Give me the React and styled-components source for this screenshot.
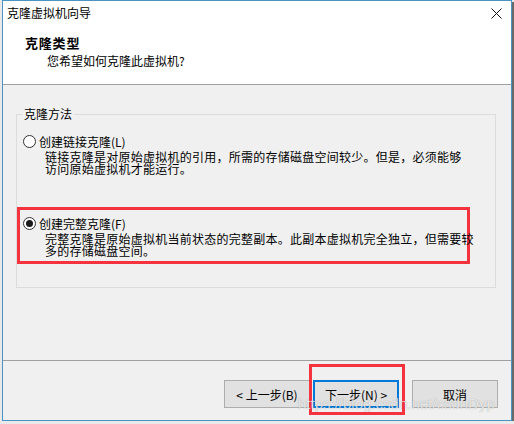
import React, { useState } from 'react'
import styled, { createGlobalStyle, css } from 'styled-components';

const GlobalStyle = createGlobalStyle`
  html, body {
    margin: 0;
    padding: 0;
    background: #e9e9e9;
  }
  body {
    font-family: "Noto Sans CJK SC", "Microsoft YaHei", sans-serif;
    font-size: 12px;
    color: #000;
  }
`;

const Window = styled.div`
  position: relative;
  box-sizing: border-box;
  margin-left: 2px;
  width: 510px;
  height: 421px;
  border: 1px solid #4a93c2;
  background: #f0f0f0;
  display: flex;
  flex-direction: column;
  box-shadow: 2px 2px 0 #6a6a6a;
`;

const Header = styled.div`
  height: 83px;
  background: #fff;
  border-bottom: 1px solid #a0a0a0;
  display: flex;
  flex-direction: column;
`;

const TitleBar = styled.div`
  height: 24px;
  display: flex;
  align-items: center;
  justify-content: space-between;
  padding: 0 9px 0 4px;
  line-height: 24px;
`;

const CloseButton = styled.div`
  width: 11px;
  height: 11px;
  display: flex;
  margin-top: 1px;
`;

const HeaderTitle = styled.div`
  margin: 10px 0 0 22px;
  font-size: 13px;
  font-weight: bold;
  line-height: 16px;
  letter-spacing: 0.8px;
`;

const HeaderSub = styled.div`
  margin: 2px 0 0 44px;
  line-height: 16px;
`;

const Body = styled.div`
  flex: 1;
  padding: 22px 0 0 13px;
`;

const Group = styled.fieldset`
  box-sizing: border-box;
  width: 480px;
  margin: 0;
  padding: 0;
  border: 1px solid #dcdcdc;
  min-inline-size: auto;
`;

const Legend = styled.legend`
  margin-left: 5px;
  padding: 0 2px;
  line-height: 14px;
`;

const Highlight = styled.div`
  box-sizing: border-box;
  width: 453px;
  border: 3px solid #f5333f;
  margin: ${p => p.$mt || 0}px 0 ${p => p.$mb || 0}px;
  padding: ${p => p.$pad};
`;

const Option = styled.div`
  padding-left: ${p => p.$indent}px;
  margin-top: ${p => p.$mt || 0}px;
`;

const OptionRow = styled.label`
  display: flex;
  align-items: center;
  height: 14px;
  gap: 3px;
  cursor: default;
`;

const Radio = styled.span`
  box-sizing: border-box;
  width: 13px;
  height: 13px;
  border-radius: 50%;
  border: 1px solid #333;
  background: #fff;
  display: flex;
  align-items: center;
  justify-content: center;
  ${p => p.$checked && css`
    &::after {
      content: '';
      width: 7px;
      height: 7px;
      border-radius: 50%;
      background: #1a1a1a;
    }
  `}
`;

const Desc = styled.div`
  margin: 3px 0 0 22px;
  line-height: 12px;
  letter-spacing: 0.25px;
  white-space: nowrap;
`;

const Footer = styled.div`
  height: 60px;
  border-top: 1px solid #a0a0a0;
  display: flex;
  justify-content: flex-end;
  align-items: flex-start;
  padding: 19px 13px 0 0;
  box-sizing: border-box;
`;

const Button = styled.button`
  box-sizing: border-box;
  width: 86px;
  height: 28px;
  margin: 0;
  margin-left: ${p => p.$ml || 0}px;
  border: ${p => p.$primary ? '2px solid #0078d7' : '1px solid #adadad'};
  background: #e1e1e1;
  font-family: inherit;
  font-size: 12px;
  color: #000;
  padding: 0;
  display: flex;
  align-items: center;
  justify-content: center;
`;

const ButtonMark = styled.div`
  display: flex;
  border: 3px solid #f5333f;
  margin: -16px 0 0 -1px;
  padding: 13px 3px 4px 1px;
`;

const Watermark = styled.div`
  position: absolute;
  left: 295px;
  top: 394px;
  font-family: "Liberation Sans", Arial, sans-serif;
  font-size: 15px;
  line-height: 17px;
  color: rgba(255, 255, 255, 0.75);
  text-shadow: 0 0 1px rgba(0, 0, 0, 0.35);
  pointer-events: none;
`;

const options = [
  {
    key: 'link',
    label: '创建链接克隆(L)',
    lines: ['链接克隆是对原始虚拟机的引用，所需的存储磁盘空间较少。但是，必须能够', '访问原始虚拟机才能运行。'],
  },
  {
    key: 'full',
    label: '创建完整克隆(F)',
    lines: ['完整克隆是原始虚拟机当前状态的完整副本。此副本虚拟机完全独立，但需要较', '多的存储磁盘空间。'],
  },
];

const OptionItem = ({ item, checked, onPick, indent, mt }) => (
  <Option $indent={indent} $mt={mt}>
    <OptionRow onClick={() => onPick(item.key)}>
      <Radio $checked={checked} />
      {item.label}
    </OptionRow>
    <Desc>
      {item.lines.map(l => <div key={l}>{l}</div>)}
    </Desc>
  </Option>
);

const App = () => {
  const [picked, setPicked] = useState('full');

  return (
    <>
      <GlobalStyle />
      <Window>
        <Header>
          <TitleBar>
            <span>克隆虚拟机向导</span>
            <CloseButton>
              <svg width="11" height="11" viewBox="0 0 11 11">
                <path d="M0.5 0.5 L10.5 10.5 M10.5 0.5 L0.5 10.5" stroke="#111" strokeWidth="1" fill="none" />
              </svg>
            </CloseButton>
          </TitleBar>
          <HeaderTitle>克隆类型</HeaderTitle>
          <HeaderSub>您希望如何克隆此虚拟机?</HeaderSub>
        </Header>

        <Body>
          <Group>
            <Legend>克隆方法</Legend>
            <OptionItem item={options[0]} checked={picked === 'link'} onPick={setPicked} indent={6} mt={13} />
            <Highlight $mt={32} $mb={23} $pad="6px 0 4px 0">
              <OptionItem item={options[1]} checked={picked === 'full'} onPick={setPicked} indent={3} />
            </Highlight>
          </Group>
        </Body>

        <Footer>
          <Button>&lt; 上一步(B)</Button>
          <ButtonMark>
            <Button $primary>下一步(N) &gt;</Button>
          </ButtonMark>
          <Button $ml={7}>取消</Button>
        </Footer>

        <Watermark>https://blog.csdn.net/csdnDyp</Watermark>
      </Window>
    </>
  )
}

export default App
